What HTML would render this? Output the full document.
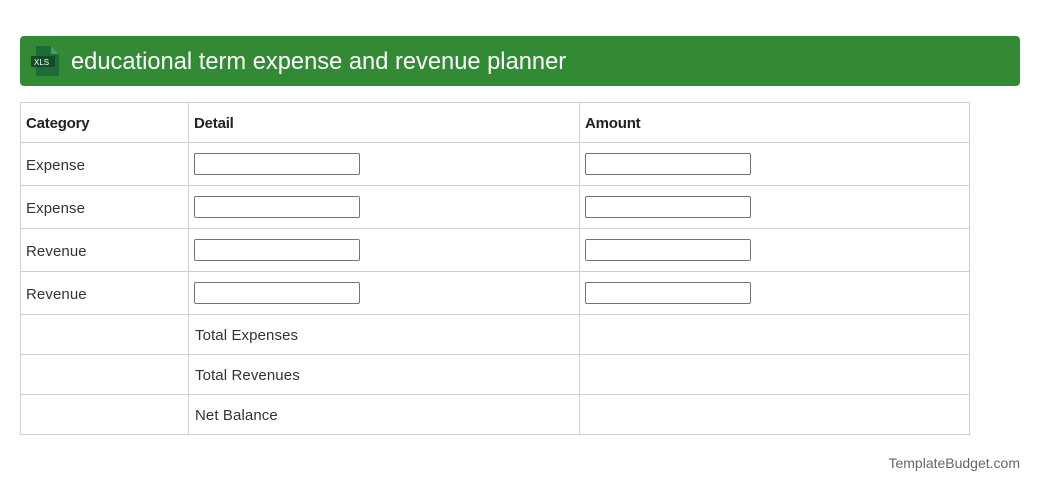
<!DOCTYPE html>
<html><head><style>
body{margin:0;width:1040px;height:492px;background:#fff;font-family:"Liberation Sans",Arial,sans-serif;position:relative;overflow:hidden}
.bar{position:absolute;left:20px;top:36px;width:1000px;height:50px;background:#338a35;border-radius:4px}
.title{position:absolute;left:71px;top:48px;color:#fff;font-size:23.7px;line-height:28px}
.l{position:absolute;background:#cfcfcf}
.t{position:absolute;font-size:15px;color:#333;letter-spacing:0.1px}
.b{font-weight:bold;color:#222;letter-spacing:-0.2px}
.in{position:absolute;width:164px;height:20px;border:1px solid #767676;border-radius:2px;background:#fff}
.foot{position:absolute;right:20px;top:455px;font-size:14px;color:#666}
</style></head><body>
<div class="bar"></div>
<svg style="position:absolute;left:31px;top:46px" width="30" height="30" viewBox="0 0 30 30">
<path d="M5 0h15l8 8v22H5z" fill="#1e6b3a"/><path d="M20 0l8 8h-8z" fill="#4a9a62"/>
<rect x="0" y="10" width="24" height="11" fill="#124d28"/>
<text x="3" y="19" font-size="8" fill="#fff" font-family="Liberation Sans">XLS</text></svg>
<div class="title">educational term expense and revenue planner</div>
<div class="l" style="left:20px;width:950px;height:1px;top:102px"></div>
<div class="l" style="left:20px;width:950px;height:1px;top:142px"></div>
<div class="l" style="left:20px;width:950px;height:1px;top:185px"></div>
<div class="l" style="left:20px;width:950px;height:1px;top:228px"></div>
<div class="l" style="left:20px;width:950px;height:1px;top:271px"></div>
<div class="l" style="left:20px;width:950px;height:1px;top:314px"></div>
<div class="l" style="left:20px;width:950px;height:1px;top:354px"></div>
<div class="l" style="left:20px;width:950px;height:1px;top:394px"></div>
<div class="l" style="left:20px;width:950px;height:1px;top:434px"></div>
<div class="l" style="left:20px;width:1px;height:333px;top:102px"></div>
<div class="l" style="left:188px;width:1px;height:333px;top:102px"></div>
<div class="l" style="left:579px;width:1px;height:333px;top:102px"></div>
<div class="l" style="left:969px;width:1px;height:333px;top:102px"></div>
<div class="t b" style="left:26px;top:115px">Category</div>
<div class="t b" style="left:194px;top:115px">Detail</div>
<div class="t b" style="left:585px;top:115px">Amount</div>
<div class="t" style="left:26px;top:157px">Expense</div>
<div class="t" style="left:26px;top:200px">Expense</div>
<div class="t" style="left:26px;top:243px">Revenue</div>
<div class="t" style="left:26px;top:286px">Revenue</div>
<div class="in" style="left:194px;top:153px"></div><div class="in" style="left:585px;top:153px"></div>
<div class="in" style="left:194px;top:196px"></div><div class="in" style="left:585px;top:196px"></div>
<div class="in" style="left:194px;top:239px"></div><div class="in" style="left:585px;top:239px"></div>
<div class="in" style="left:194px;top:282px"></div><div class="in" style="left:585px;top:282px"></div>
<div class="t" style="left:195px;top:327px">Total Expenses</div>
<div class="t" style="left:195px;top:367px">Total Revenues</div>
<div class="t" style="left:195px;top:407px">Net Balance</div>
<div class="foot">TemplateBudget.com</div>
</body></html>
